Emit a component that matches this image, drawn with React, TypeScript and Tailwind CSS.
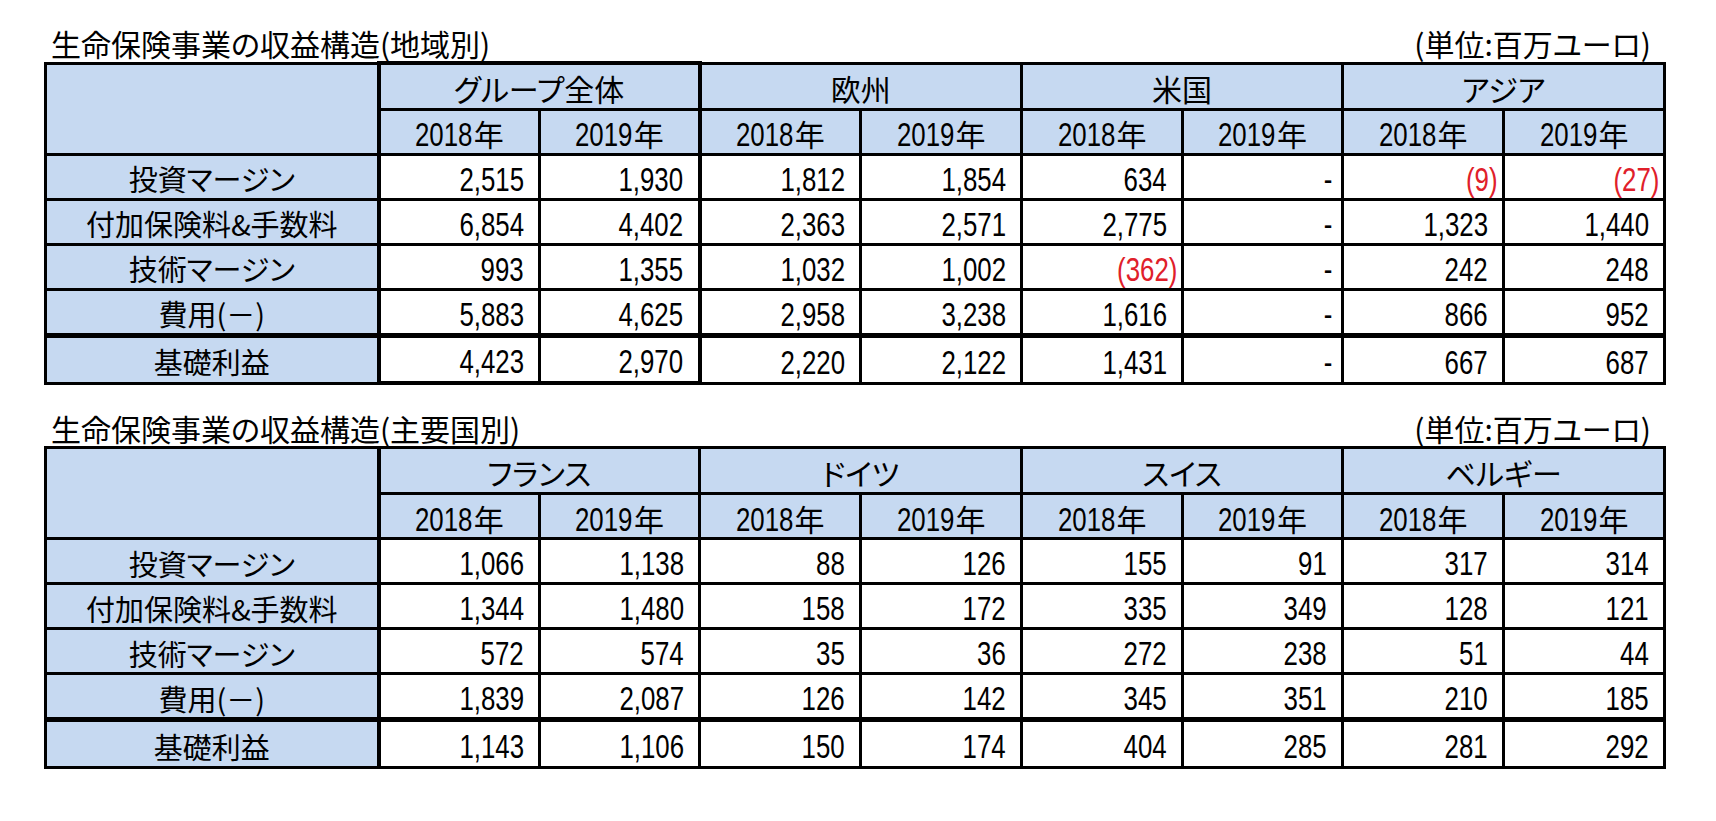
import React from "react";

type Row = { label: string; values: string[] };
type TableDef = {
  title: string;
  groups: string[];
  rows: Row[];
  groupBox: boolean;
};

const tables: TableDef[] = [
  {
    title: "生命保険事業の収益構造(地域別)",
    groups: ["グループ全体", "欧州", "米国", "アジア"],
    groupBox: true,
    rows: [
      { label: "投資マージン", values: ["2,515", "1,930", "1,812", "1,854", "634", "-", "(9)", "(27)"] },
      { label: "付加保険料&手数料", values: ["6,854", "4,402", "2,363", "2,571", "2,775", "-", "1,323", "1,440"] },
      { label: "技術マージン", values: ["993", "1,355", "1,032", "1,002", "(362)", "-", "242", "248"] },
      { label: "費用(－)", values: ["5,883", "4,625", "2,958", "3,238", "1,616", "-", "866", "952"] },
      { label: "基礎利益", values: ["4,423", "2,970", "2,220", "2,122", "1,431", "-", "667", "687"] },
    ],
  },
  {
    title: "生命保険事業の収益構造(主要国別)",
    groups: ["フランス", "ドイツ", "スイス", "ベルギー"],
    groupBox: false,
    rows: [
      { label: "投資マージン", values: ["1,066", "1,138", "88", "126", "155", "91", "317", "314"] },
      { label: "付加保険料&手数料", values: ["1,344", "1,480", "158", "172", "335", "349", "128", "121"] },
      { label: "技術マージン", values: ["572", "574", "35", "36", "272", "238", "51", "44"] },
      { label: "費用(－)", values: ["1,839", "2,087", "126", "142", "345", "351", "210", "185"] },
      { label: "基礎利益", values: ["1,143", "1,106", "150", "174", "404", "285", "281", "292"] },
    ],
  },
];

const colWidths = [333, 161, 160, 161, 161, 161, 160, 161, 161];
const rowHeights = ["h-[46px]", "h-[45px]", "h-[45px]", "h-[45px]", "h-[45px]", "h-[46px]", "h-[48px]"];

function NumCell({ v, className }: { v: string; className: string }) {
  const neg = v.startsWith("(");
  const dash = v === "-";
  const pad = neg ? "pr-[4px]" : dash ? "pr-[9px]" : "pr-[14px]";
  const color = neg ? "text-[#e0202a]" : "text-black";
  return (
    <td
      className={`bg-white text-right align-middle pt-[4px] pb-0 leading-none text-[34px] font-['Liberation_Sans',sans-serif] whitespace-nowrap ${pad} ${color} ${className}`}
    >
      <span className="inline-block origin-right scale-x-[0.76]">{v}</span>
    </td>
  );
}

function YearLabel({ y }: { y: string }) {
  return (
    <span className="inline-flex items-baseline">
      <span className="inline-block w-[59px] text-left whitespace-nowrap text-[34px] font-['Liberation_Sans',sans-serif]">
        <span className="inline-block origin-left scale-x-[0.76]">{y}</span>
      </span>
      <span className="text-[30px] font-['Noto_Sans_CJK_JP',sans-serif]">年</span>
    </span>
  );
}

function DataTable({ t }: { t: TableDef }) {
  const inBoxL = (i: number) => t.groupBox && i === 0;
  const inBoxR = (i: number) => t.groupBox && i === 1;
  return (
    <table className="border-collapse table-fixed w-[1619px] border-[3px] border-black">
      <colgroup>
        {colWidths.map((w, i) => (
          <col key={i} style={{ width: w }} />
        ))}
      </colgroup>
      <tbody>
        <tr className={rowHeights[0]}>
          <td rowSpan={2} className="bg-[#c6d9f1] border-[3px] border-r-4 border-black" />
          {t.groups.map((g, gi) => (
            <td
              key={g}
              colSpan={2}
              className={`bg-[#c6d9f1] border-[3px] border-black text-center align-middle pt-[3px] leading-none text-[30px] text-black font-['Noto_Sans_CJK_JP',sans-serif] [font-feature-settings:'palt'] ${
                t.groupBox && gi === 0 ? "border-t-4 border-l-4 border-r-4" : ""
              }`}
            >
              {g}
            </td>
          ))}
        </tr>
        <tr className={rowHeights[1]}>
          {Array.from({ length: 8 }).map((_, i) => (
            <td
              key={i}
              className={`bg-[#c6d9f1] border-[3px] border-black text-center align-middle pt-[5px] leading-none text-black ${
                inBoxL(i) ? "border-l-4" : ""
              } ${inBoxR(i) ? "border-r-4" : ""}`}
            >
              <YearLabel y={i % 2 === 0 ? "2018" : "2019"} />
            </td>
          ))}
        </tr>
        {t.rows.map((r, ri) => {
          const last = ri === t.rows.length - 1;
          const top = last ? "border-t-[5px]" : "";
          const bottom = last && t.groupBox ? "border-b-4" : "";
          return (
            <tr key={r.label} className={rowHeights[ri + 2]}>
              <td
                className={`bg-[#c6d9f1] border-[3px] border-r-4 border-black text-center align-middle pt-[4px] leading-none text-[29px] text-black font-['Noto_Sans_CJK_JP',sans-serif] [font-feature-settings:'palt'] ${top}`}
              >
                {r.label}
              </td>
              {r.values.map((v, i) => (
                <NumCell
                  key={i}
                  v={v}
                  className={`border-[3px] border-black ${top} ${inBoxL(i) ? "border-l-4" : ""} ${
                    inBoxR(i) ? "border-r-4" : ""
                  } ${inBoxL(i) || inBoxR(i) ? bottom : ""}`}
                />
              ))}
            </tr>
          );
        })}
      </tbody>
    </table>
  );
}

function TitleRow({ title }: { title: string }) {
  return (
    <div className="w-[1619px] h-[37px] flex items-center justify-between text-black font-['Noto_Sans_CJK_JP',sans-serif] [font-feature-settings:'palt']">
      <span className="pl-[7px] text-[30px] leading-none">{title}</span>
      <span className="pr-[12px] text-[30px] leading-none">(単位:百万ユーロ)</span>
    </div>
  );
}

export default function App() {
  return (
    <div className="w-[1716px] h-[821px] bg-white pl-[44px] pt-[24px]">
      <TitleRow title={tables[0].title} />
      <DataTable t={tables[0]} />
      <div className="mt-[24px]">
        <TitleRow title={tables[1].title} />
        <DataTable t={tables[1]} />
      </div>
    </div>
  );
}
